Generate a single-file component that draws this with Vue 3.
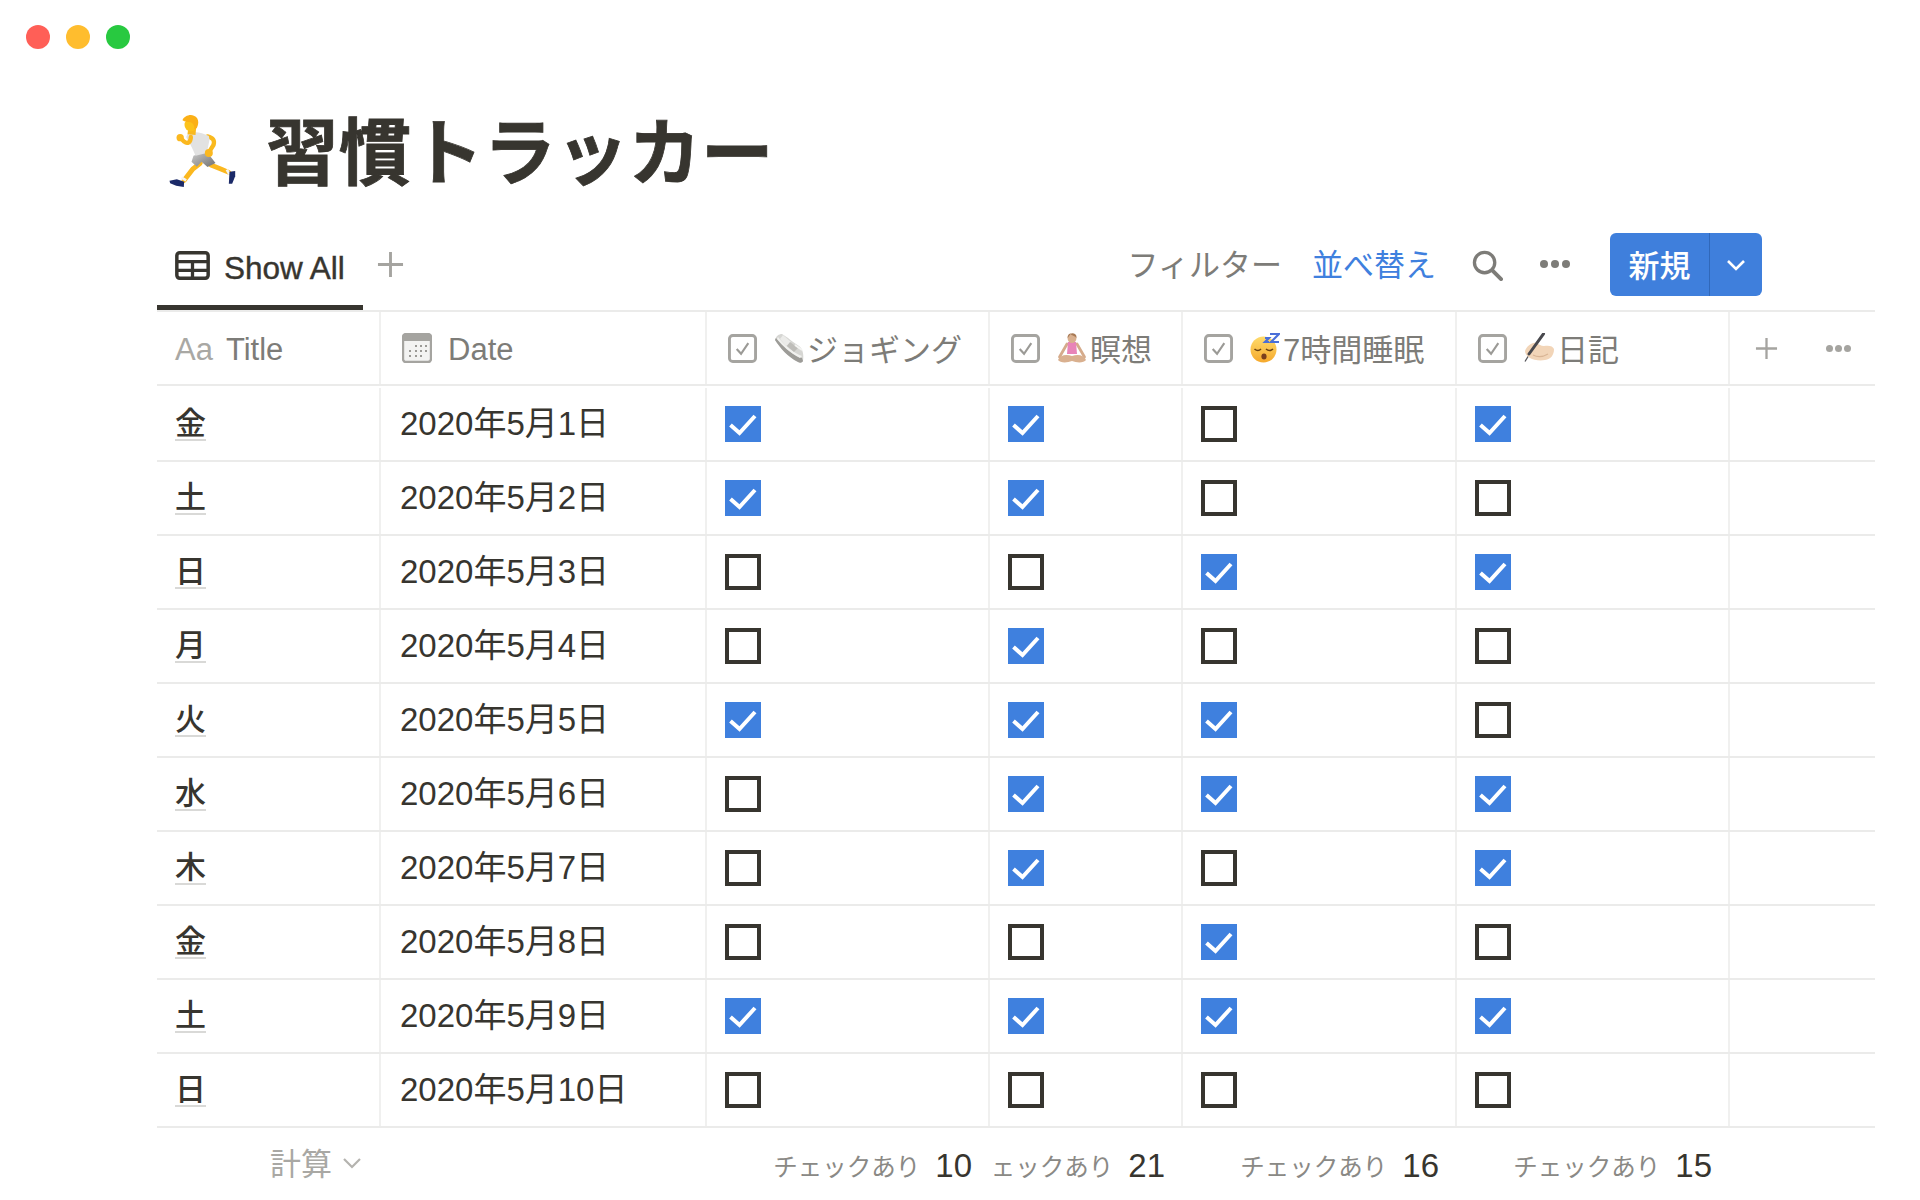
<script setup>
const columns = [
  { key: 'jog', label: 'ジョギング', emoji: 'shoe', count: 10 },
  { key: 'med', label: '瞑想', emoji: 'med', count: 21 },
  { key: 'sleep', label: '7時間睡眠', emoji: 'sleep', count: 16 },
  { key: 'diary', label: '日記', emoji: 'write', count: 15 },
]

const rows = [
  { title: '金', date: '2020年5月1日', checks: [1, 1, 0, 1] },
  { title: '土', date: '2020年5月2日', checks: [1, 1, 0, 0] },
  { title: '日', date: '2020年5月3日', checks: [0, 0, 1, 1] },
  { title: '月', date: '2020年5月4日', checks: [0, 1, 0, 0] },
  { title: '火', date: '2020年5月5日', checks: [1, 1, 1, 0] },
  { title: '水', date: '2020年5月6日', checks: [0, 1, 1, 1] },
  { title: '木', date: '2020年5月7日', checks: [0, 1, 0, 1] },
  { title: '金', date: '2020年5月8日', checks: [0, 0, 1, 0] },
  { title: '土', date: '2020年5月9日', checks: [1, 1, 1, 1] },
  { title: '日', date: '2020年5月10日', checks: [0, 0, 0, 0] },
]
</script>

<template>
  <main class="page">
    <div class="traffic">
      <span class="dot red"></span>
      <span class="dot yellow"></span>
      <span class="dot green"></span>
    </div>

    <h1 class="title">
      <svg class="runner" viewBox="57 50 203 216">
        <defs>
          <linearGradient id="shorts" x1="0" y1="0" x2="1" y2="1">
            <stop offset="0" stop-color="#cfcfcf" />
            <stop offset="1" stop-color="#6f6f6f" />
          </linearGradient>
        </defs>
        <path d="M172 114 C190 118 194 128 190 140 L176 162" fill="none" stroke="#f9b91e" stroke-width="13" stroke-linecap="round" />
        <path d="M150 195 L128 212 L102 246" fill="none" stroke="#fbb81f" stroke-width="15" stroke-linecap="round" />
        <path d="M182 200 L212 212 L236 222" fill="none" stroke="#fbb81f" stroke-width="14" stroke-linecap="round" />
        <path d="M94 238 L108 246 M230 214 L238 228" stroke="#f4f4f4" stroke-width="8" />
        <path d="M130 172 L168 158 L196 194 L172 206 L154 190 L140 205 L124 190Z" fill="url(#shorts)" />
        <path d="M112 108 C126 98 152 100 176 113 L178 124 L170 164 L136 172 C128 150 114 128 108 116Z" fill="#e2e2e2" />
        <circle cx="176" cy="164" r="12" fill="#fbb81f" />
        <path d="M122 116 C122 132 112 138 102 130 L92 120" fill="none" stroke="#fbb81f" stroke-width="13" stroke-linecap="round" />
        <circle cx="90" cy="118" r="11" fill="#fbb81f" />
        <path d="M114 90 L112 108 L136 110 L138 88Z" fill="#f9b91e" />
        <circle cx="122" cy="80" r="19" fill="#fcc21b" />
        <path d="M97 66 C101 54 118 47 131 52 C144 57 147 70 142 84 C140 90 136 94 132 92 C134 84 130 76 122 72 C113 70 104 72 97 66Z" fill="#fbb017" />
        <path d="M58 247 L80 243 L102 250 L101 266 L78 262 L60 255Z" fill="#1b2a68" />
        <path d="M238 220 L255 218 L255 234 L246 256 L236 256 L237 238Z" fill="#1b2a68" />
      </svg>
      <span>習慣トラッカー</span>
    </h1>

    <div class="toolbar">
      <div class="tabs">
        <div class="tab">
          <svg class="tab-icon" viewBox="0 0 36 30">
            <rect x="1.8" y="1.8" width="32.4" height="26.4" rx="3" fill="none" stroke="#37352f" stroke-width="3.6" />
            <path d="M1.5 11 H34.5 M1.5 20 H34.5 M18 11 V28.5" stroke="#37352f" stroke-width="3.4" />
          </svg>
          <span>Show All</span>
        </div>
        <svg class="tab-plus" viewBox="0 0 28 28"><path d="M14 1 V27 M1 14 H27" stroke="#a5a4a0" stroke-width="3" /></svg>
      </div>
      <div class="actions">
        <span class="action">フィルター</span>
        <span class="action blue">並べ替え</span>
        <svg class="search" viewBox="0 0 32 32">
          <circle cx="13" cy="13" r="10.5" fill="none" stroke="#7d7c78" stroke-width="3.4" />
          <path d="M21 21 L30 30" stroke="#7d7c78" stroke-width="4" stroke-linecap="round" />
        </svg>
        <span class="more"><i></i><i></i><i></i></span>
        <div class="new-btn">
          <span class="new-text">新規</span>
          <span class="new-arrow">
            <svg viewBox="0 0 20 14"><path d="M2 3 L10 11 L18 3" fill="none" stroke="#fff" stroke-width="2.6" /></svg>
          </span>
        </div>
      </div>
    </div>

    <section class="table">
      <div class="row head">
        <div class="cell c-title">
          <span class="aa">Aa</span>
          <span class="latin">Title</span>
        </div>
        <div class="cell c-date">
          <svg class="head-icon" viewBox="0 0 30 30">
            <rect x="1" y="1" width="28" height="28" rx="3" fill="#f3f3f2" stroke="#a5a4a0" stroke-width="2.4" />
            <path d="M1 3.5 a3 3 0 0 1 3 -2.5 H26 a3 3 0 0 1 3 2.5 V8 H1Z" fill="#a5a4a0" />
            <g fill="#9b9a96">
              <rect x="13" y="12" width="2" height="2" /><rect x="18" y="12" width="2" height="2" /><rect x="23" y="12" width="2" height="2" />
              <rect x="7" y="17" width="2" height="2" /><rect x="13" y="17" width="2" height="2" /><rect x="18" y="17" width="2" height="2" /><rect x="23" y="17" width="2" height="2" />
              <rect x="7" y="22" width="2" height="2" /><rect x="13" y="22" width="2" height="2" /><rect x="18" y="22" width="2" height="2" />
            </g>
          </svg>
          <span class="latin">Date</span>
        </div>
        <div v-for="col in columns" :key="col.key" class="cell" :class="'c-' + col.key">
          <svg class="head-check" viewBox="0 0 30 30">
            <rect x="1.5" y="1.5" width="27" height="27" rx="3.5" fill="none" stroke="#a5a4a0" stroke-width="3" />
            <path d="M9 15.5 L13.5 20.5 L21 9.5" fill="none" stroke="#9b9a96" stroke-width="2.2" />
          </svg>
          <svg v-if="col.emoji === 'shoe'" class="emoji" viewBox="0 0 30 30">
            <path d="M1 7 C2 3 5 1 8 1 L14 5 C17 8 21 10 25 13 C29 16 30 22 29 28 C28 30 26 30 24 29 C16 25 7 16 1 7Z" fill="#d6d6d3" />
            <path d="M1 7 C6 15 14 24 24 29 C26 30 28 30 29 28 L28 25 C20 23 9 14 2 5Z" fill="#9d9c98" />
            <path d="M3 6 C8 12 16 20 26 25 L28 23 C20 20 10 12 4 4Z" fill="#f1f1ef" />
            <path d="M9 2 L17 9 L12 13 L6 6Z" fill="#ebebe9" />
            <path d="M16 9 L24 15 L20 19 L13 13Z" fill="#bebdb9" />
            <path d="M21 12 L28 17" stroke="#f4f4f2" stroke-width="2" />
          </svg>
          <svg v-else-if="col.emoji === 'med'" class="emoji" viewBox="0 0 30 30">
            <path d="M10 11 L2.5 24 M20 11 L27.5 24" stroke="#d5ab8b" stroke-width="2.8" stroke-linecap="round" />
            <path d="M11 9 H19 L20 21 H10Z" fill="#e884b8" />
            <circle cx="15" cy="5.6" r="4.4" fill="#d9b08f" />
            <path d="M10.5 5 C10.5 1 13 0 15 .5 C12.5 1 11.5 5 10.5 5Z M13 1 C15 -.5 20 0 19.6 5 C18 3 15 2.6 13 1Z" fill="#a87a55" />
            <path d="M1 27 C3 22 9 21 15 23 C21 21 27 22 29 27 C27 30 20 30 15 28 C10 30 3 30 1 27Z" fill="#d9b08f" />
          </svg>
          <svg v-else-if="col.emoji === 'sleep'" class="emoji" viewBox="0 0 30 30">
            <defs>
              <linearGradient id="face" x1="0" y1="0" x2="0" y2="1">
                <stop offset="0" stop-color="#fedb6b" />
                <stop offset="1" stop-color="#f6a92c" />
              </linearGradient>
            </defs>
            <circle cx="13.5" cy="16.5" r="13" fill="url(#face)" />
            <path d="M4.5 16 Q8 19 11 16 M16 16 Q19.5 19 23 16" fill="none" stroke="#6b4210" stroke-width="1.6" />
            <ellipse cx="14" cy="23.5" rx="2.6" ry="3" fill="#7a3f1c" />
            <path d="M15 5 H19 L15 9 H19 M20 1 H29 L21 9 H29" fill="none" stroke="#4a6fd8" stroke-width="2.2" />
          </svg>
          <svg v-else class="emoji" viewBox="0 0 30 30">
            <path d="M1 28.5 L5 22" stroke="#55555a" stroke-width="1.3" />
            <path d="M1 18 C3 13 8 9 12 10 C15 11 17 13 20 13 C25 12 29 13 30 16 C30 22 27 26 21 27 C16 28 9 27 6 25 C3 23 1 21 1 18Z" fill="#f2d5b8" />
            <path d="M5 21 L19.5 .8" stroke="#48484d" stroke-width="3" stroke-linecap="round" />
            <path d="M9 22 C13 24 19 24 24 21" fill="none" stroke="#d9b595" stroke-width="1.2" />
          </svg>
          <span class="cjk">{{ col.label }}</span>
        </div>
        <div class="cell c-end">
          <svg class="head-plus" viewBox="0 0 24 24"><path d="M12 1 V23 M1 12 H23" stroke="#a5a4a0" stroke-width="2.4" /></svg>
          <span class="more small"><i></i><i></i><i></i></span>
        </div>
      </div>

      <div v-for="(row, r) in rows" :key="r" class="row">
        <div class="cell c-title"><span class="name">{{ row.title }}</span></div>
        <div class="cell c-date date">{{ row.date }}</div>
        <div v-for="(col, i) in columns" :key="col.key" class="cell" :class="'c-' + col.key">
          <span v-if="row.checks[i]" class="box on">
            <svg viewBox="0 0 36 36"><path d="M5.5 19 L14.5 27 L30 10" fill="none" stroke="#fff" stroke-width="4" /></svg>
          </span>
          <span v-else class="box"></span>
        </div>
        <div class="cell c-end"></div>
      </div>

      <div class="row foot">
        <div class="cell c-title calc">
          <span>計算</span>
          <svg viewBox="0 0 20 14"><path d="M2 3 L10 11 L18 3" fill="none" stroke="#b4b3af" stroke-width="2.2" /></svg>
        </div>
        <div class="cell c-date"></div>
        <div v-for="col in columns" :key="col.key" class="cell sum" :class="'c-' + col.key">
          <span class="sum-label">チェックあり</span>
          <span class="sum-num">{{ col.count }}</span>
        </div>
        <div class="cell c-end"></div>
      </div>
    </section>
  </main>
</template>

<style scoped>
.page {
  width: 1920px;
  height: 1200px;
  overflow: hidden;
  background: #fff;
  color: #37352f;
  font-family: "Liberation Sans", "Noto Sans CJK JP", sans-serif;
  font-size: 30px;
}

.traffic {
  display: flex;
  gap: 16px;
  padding: 25px 0 0 26px;
}
.dot {
  width: 24px;
  height: 24px;
  border-radius: 50%;
}
.red { background: #ff5f57; }
.yellow { background: #ffbd2e; }
.green { background: #28c940; }

.title {
  display: flex;
  align-items: center;
  gap: 29px;
  margin: 57px 0 0 169px;
  height: 84px;
  font-size: 72.5px;
  line-height: 84px;
  font-weight: 700;
  font-family: "Noto Sans CJK JP", sans-serif;
  -webkit-text-stroke: 0.8px #37352f;
}
.runner {
  width: 68px;
  height: 72px;
  margin-top: 6px;
}

.toolbar {
  display: flex;
  justify-content: space-between;
  align-items: stretch;
  width: 1605px;
  margin: 43px 0 0 157px;
  height: 77px;
}
.tabs {
  display: flex;
  align-items: flex-start;
}
.tab {
  box-sizing: border-box;
  width: 206px;
  height: 77px;
  padding: 17px 0 0 18px;
  display: flex;
  align-items: flex-start;
  gap: 14px;
  border-bottom: 5px solid #37352f;
  font-size: 31.5px;
  line-height: 36px;
  -webkit-text-stroke: 0.4px #37352f;
}
.tab-icon {
  width: 35px;
  height: 29px;
  margin-top: 1px;
}
.tab-plus {
  width: 27px;
  height: 27px;
  margin: 18px 0 0 14px;
}
.actions {
  display: flex;
  align-items: flex-start;
}
.action {
  font-size: 31px;
  color: #7d7c78;
  line-height: 46px;
  margin: 7px 0 0 0;
  font-family: "Noto Sans CJK JP", sans-serif;
}
.action.blue {
  color: #3f80de;
  margin-left: 30px;
}
.search {
  width: 31px;
  height: 31px;
  margin: 17px 0 0 36px;
}
.more {
  display: inline-flex;
  gap: 3px;
  margin: 27px 0 0 37px;
}
.more i {
  width: 8px;
  height: 8px;
  border-radius: 50%;
  background: #7d7c78;
}
.new-btn {
  display: flex;
  width: 152px;
  height: 63px;
  margin: 0 0 0 40px;
  border-radius: 6px;
  background: #3f7fdc;
  color: #fff;
  font-family: "Noto Sans CJK JP", sans-serif;
  font-weight: 500;
}
.new-text {
  width: 99px;
  border-right: 1px solid #3068ba;
  text-align: center;
  font-size: 31px;
  line-height: 62px;
}
.new-arrow {
  flex: 1;
  display: flex;
  align-items: center;
  justify-content: center;
}
.new-arrow svg {
  width: 20px;
  height: 14px;
}

.table {
  width: 1718px;
  margin-left: 157px;
  border-top: 2px solid #ebebea;
}
.row {
  display: grid;
  grid-template-columns: 224px 326px 283px 193px 274px 273px 145px;
  height: 74px;
  box-sizing: border-box;
  border-bottom: 2px solid #ebebea;
}
.row.head {
  height: 74px;
  color: #7d7c78;
  font-size: 31px;
}
.head + .row {
  margin-top: 2px;
}
.row.foot {
  height: 70px;
  border-bottom: none;
}
.cell {
  box-sizing: border-box;
  display: flex;
  align-items: center;
  padding-left: 18px;
  border-right: 2px solid #f0f0ef;
  min-width: 0;
  white-space: nowrap;
}
.c-end {
  border-right: none;
  padding-left: 25px;
}
.foot .cell {
  border-right: none;
}

.aa {
  color: #a9a8a4;
  margin: 3px 13px 0 0;
}
.latin {
  margin-top: 3px;
}
.cjk {
  margin-bottom: 2px;
}
.head-icon {
  width: 30px;
  height: 30px;
  margin-right: 16px;
  margin-left: 3px;
}
.head-check {
  width: 29px;
  height: 29px;
  margin-left: 3px;
  margin-right: 17px;
  flex: none;
}
.emoji {
  width: 30px;
  height: 30px;
  flex: none;
  margin-right: 3px;
}
.head-plus {
  width: 23px;
  height: 23px;
}
.more.small {
  margin: 0 0 0 48px;
  gap: 2px;
}
.more.small i {
  width: 7px;
  height: 7px;
  background: #a5a4a0;
}

.name {
  font-weight: 500;
  line-height: 36px;
  font-size: 31px;
  margin-bottom: 5px;
  border-bottom: 2px solid #d9d9d7;
  font-family: "Noto Sans CJK JP", sans-serif;
}
.date {
  font-size: 33px;
  padding-left: 19px;
  padding-bottom: 6px;
}
.box {
  box-sizing: border-box;
  width: 36px;
  height: 36px;
  border: 4px solid #37352f;
}
.box.on {
  border: none;
  background: #3f80de;
}
.box svg {
  display: block;
  width: 36px;
  height: 36px;
}

.calc {
  justify-content: flex-end;
  padding: 0 19px 4px 0;
  color: #a9a8a4;
  gap: 10px;
  font-size: 31px;
}
.calc svg {
  width: 20px;
  height: 14px;
  margin-top: 4px;
}
.sum {
  justify-content: flex-end;
  padding: 5px 18px 0 0;
  overflow: hidden;
}
.sum-label {
  flex: none;
  font-size: 24.5px;
  color: #8a8985;
}
.sum-num {
  flex: none;
  margin-left: 15px;
  font-size: 33px;
}
</style>
